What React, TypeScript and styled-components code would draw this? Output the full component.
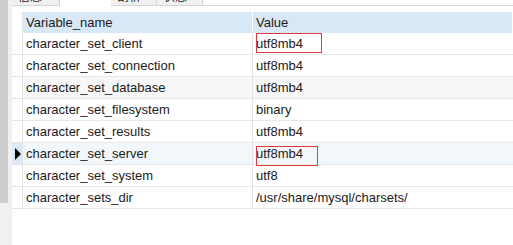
import * as React from "react";
import styled, { createGlobalStyle } from "styled-components";

const GlobalStyle = createGlobalStyle`
  html, body {
    margin: 0;
    padding: 0;
    background: #ffffff;
  }
  body {
    font-family: "Liberation Sans", Arial, sans-serif;
    font-size: 13px;
    color: #1a1a1a;
  }
`;

const Window = styled.div`
  display: flex;
  width: 513px;
  height: 245px;
  overflow: hidden;
  background: #ffffff;
`;

const Gutter = styled.div`
  width: 12px;
  flex: none;
  background: #f0f0f0;
`;

const ScrollThumb = styled.div`
  width: 8px;
  height: 203px;
  background: #cdcdcd;
`;

const Main = styled.div`
  flex: 1;
  display: flex;
  flex-direction: column;
  min-width: 0;
`;

const TabBar = styled.div`
  display: flex;
  height: 6px;
  flex: none;
`;

const Tab = styled.div<{ $active?: boolean; $width: number }>`
  width: ${p => p.$width}px;
  height: 6px;
  box-sizing: border-box;
  overflow: hidden;
  background: ${p => (p.$active ? "#ffffff" : "#f0f0f0")};
  border-right: ${p => (p.$active ? "none" : "1px solid #d4d4d4")};
  border-bottom: ${p => (p.$active ? "none" : "1px solid #d4d4d4")};
  font-family: "Noto Sans CJK SC", sans-serif;
  font-size: 12px;
  line-height: 16px;
  padding-left: 6px;
`;

const TabLabel = styled.div`
  margin-top: -12px;
`;

const TabFill = styled.div`
  flex: 1;
  border-bottom: 1px solid #d9d9d9;
`;

const Grid = styled.div`
  margin-top: 6px;
  display: grid;
  grid-template-columns: 11px 230px 1fr;
  grid-template-rows: 21px;
  grid-auto-rows: 22px;
`;

const HeadIndicator = styled.div`
  border-right: 1px solid #e3e3e3;
`;

const HeadCell = styled.div`
  background: #d9e8f6;
  border-right: 1px solid #ffffff;
  box-sizing: border-box;
  display: flex;
  align-items: center;
  padding-left: 3px;
`;

const Indicator = styled.div<{ $selected?: boolean }>`
  box-sizing: border-box;
  background: ${p => (p.$selected ? "#dde9f6" : "#ffffff")};
  border-right: 1px solid #e3e3e3;
  border-bottom: 1px solid #e3e3e3;
  display: flex;
  align-items: center;
  padding-left: 3px;
`;

const Arrow = styled.div`
  width: 0;
  height: 0;
  border-top: 6px solid transparent;
  border-bottom: 6px solid transparent;
  border-left: 6px solid #000000;
`;

const Cell = styled.div<{ $bg: string; $divider?: boolean }>`
  position: relative;
  box-sizing: border-box;
  background: ${p => p.$bg};
  border-bottom: 1px solid #e8e8e8;
  border-right: ${p => (p.$divider ? "1px solid #e3e3e3" : "none")};
  display: flex;
  align-items: center;
  padding-left: 3px;
  white-space: nowrap;
`;

const Mark = styled.div<{ $top: number; $width: number }>`
  position: absolute;
  z-index: 2;
  left: 3px;
  top: ${p => p.$top}px;
  width: ${p => p.$width}px;
  height: 20px;
  box-sizing: border-box;
  border: 1px solid #e0383b;
  pointer-events: none;
`;

type Row = { name: string; value: string; selected?: boolean; shaded?: boolean; mark?: { top: number; width: number } };

const rows: Row[] = [
  { name: "character_set_client", value: "utf8mb4", mark: { top: 0, width: 66 } },
  { name: "character_set_connection", value: "utf8mb4" },
  { name: "character_set_database", value: "utf8mb4", shaded: true },
  { name: "character_set_filesystem", value: "binary" },
  { name: "character_set_results", value: "utf8mb4" },
  { name: "character_set_server", value: "utf8mb4", selected: true, mark: { top: 3, width: 62 } },
  { name: "character_set_system", value: "utf8" },
  { name: "character_sets_dir", value: "/usr/share/mysql/charsets/" },
];

export default function App() {
  return (
    <>
      <GlobalStyle />
      <Window>
        <Gutter>
          <ScrollThumb />
        </Gutter>
        <Main>
          <TabBar>
            <Tab $width={48}><TabLabel>信息</TabLabel></Tab>
            <Tab $width={51} $active />
            <Tab $width={46}><TabLabel>剖析</TabLabel></Tab>
            <Tab $width={46}><TabLabel>状态</TabLabel></Tab>
            <TabFill />
          </TabBar>
          <Grid>
            <HeadIndicator />
            <HeadCell>Variable_name</HeadCell>
            <HeadCell>Value</HeadCell>
            {rows.map(r => {
              const bg = r.selected ? "#f2f7fc" : r.shaded ? "#f7f7f7" : "#ffffff";
              return (
                <React.Fragment key={r.name}>
                  <Indicator $selected={r.selected}>{r.selected && <Arrow />}</Indicator>
                  <Cell $bg={bg} $divider>{r.name}</Cell>
                  <Cell $bg={bg}>
                    {r.value}
                    {r.mark && <Mark $top={r.mark.top} $width={r.mark.width} />}
                  </Cell>
                </React.Fragment>
              );
            })}
          </Grid>
        </Main>
      </Window>
    </>
  );
}
